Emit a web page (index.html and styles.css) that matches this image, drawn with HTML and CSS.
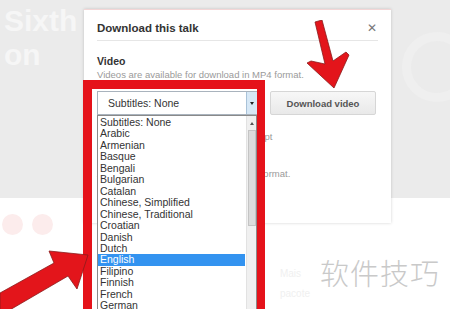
FILE: index.html
```html
<!DOCTYPE html>
<html lang="en">
<head>
  <meta charset="UTF-8" />
  <title>Download this talk</title>
  <link rel="stylesheet" href="styles.css">
</head>
<body>
  <div class="page">
    <div class="hero">
      <div class="hero-title">Sixth<br>on</div>
      <div class="hero-ring"></div>
    </div>
    <div class="below">
      <div class="dots"><span></span><span></span></div>
      <div class="faint-links">
        <div>Mais</div>
        <div>pacote</div>
      </div>
    </div>

    <!-- MODAL -->
    <div class="modal">
      <div class="modal-head">
        <div class="modal-title">Download this talk</div>
        <div class="modal-close">&#x2715;</div>
      </div>
      <div class="section">
        <div class="section-title">Video</div>
        <div class="section-note">Videos are available for download in MP4 format.</div>
        <div class="row">
          <div class="select">
            <span>Subtitles: None</span>
            <span class="select-arrow"></span>
          </div>
          <div class="btn">Download video</div>
        </div>
      </div>
      <div class="section">
        <div class="section-note">Subtitles are only available as a transcript</div>
        <div class="section-note spaced">Audio downloads are available in MP3 format.</div>
      </div>
    </div>

    <!-- OPEN LISTBOX -->
    <div class="listbox">
      <div class="options">
        <div>Subtitles: None</div>
        <div>Arabic</div>
        <div>Armenian</div>
        <div>Basque</div>
        <div>Bengali</div>
        <div>Bulgarian</div>
        <div>Catalan</div>
        <div>Chinese, Simplified</div>
        <div>Chinese, Traditional</div>
        <div>Croatian</div>
        <div>Danish</div>
        <div>Dutch</div>
        <div class="picked">English</div>
        <div>Filipino</div>
        <div>Finnish</div>
        <div>French</div>
        <div>German</div>
      </div>
      <div class="scrollbar">
        <div class="scroll-up"></div>
        <div class="scroll-thumb"></div>
      </div>
    </div>

    <!-- ANNOTATIONS -->
    <div class="frame"></div>
    <svg class="arrow arrow-top" width="60" height="70" viewBox="0 0 60 70">
      <polygon points="12,2 19,0 30,41 43,32 46,35 31,68 4,43 8,41 22,44" fill="#e3151b" stroke="#8a1c1c" stroke-width="0.8"/>
    </svg>
    <svg class="arrow arrow-left" width="95" height="70" viewBox="0 0 95 70">
      <polygon points="0,50 54,20 49,8 88,12 77,46 68,33 8,68 0,69" fill="#e3151b" stroke="#8a1c1c" stroke-width="0.8"/>
    </svg>
    <div class="watermark">软件技巧</div>
  </div>
</body>
</html>
```

FILE: styles.css
```css
/* GLOBAL RESET */
* { box-sizing: border-box; margin: 0; padding: 0; }
html, body { width: 100%; height: 100%; overflow: hidden; font-family: "Liberation Sans", Arial, sans-serif; }

/* PAGE BEHIND THE DIALOG */
.page {
  position: relative;
  width: 450px;
  height: 309px;
  display: flex;
  flex-direction: column;
  background: #fff;
}
.hero {
  height: 198px;
  background: #ebebeb;
  display: flex;
  justify-content: space-between;
  padding: 4px 0 0 4px;
}
.hero-title {
  font-size: 30px;
  font-weight: bold;
  line-height: 34px;
  color: #f6f6f6;
}
.hero-ring {
  width: 70px;
  height: 70px;
  margin: 28px -22px 0 0;
  border-radius: 50%;
  border: 9px solid #efefef;
}
.below {
  flex: 1;
  display: flex;
  justify-content: space-between;
  padding: 16px 0 0 2px;
}
.dots { display: flex; gap: 9px; }
.dots span {
  width: 21px;
  height: 21px;
  border-radius: 50%;
  background: #fcecec;
}
.faint-links {
  margin: 50px 140px 0 0;
  font-size: 10px;
  line-height: 20px;
  color: #f0f0f0;
}

/* DIALOG */
.modal {
  position: absolute;
  top: 9px;
  left: 84px;
  width: 307px;
  height: 214px;
  background: #fff;
  border-top: 1px solid #f3d6d6;
  box-shadow: 0 0 3px rgba(0, 0, 0, 0.18);
  padding: 0 13px;
}
.modal-head {
  height: 31px;
  display: flex;
  align-items: center;
  justify-content: space-between;
  border-bottom: 1px solid #e6e6e6;
  padding-top: 6px;
}
.modal-title {
  font-size: 11.5px;
  font-weight: bold;
  color: #333;
}
.modal-close {
  font-size: 12px;
  color: #777;
  margin-right: 1px;
}
.section { padding-top: 14px; }
.section-title {
  font-size: 10.5px;
  font-weight: bold;
  color: #333;
}
.section-note {
  font-size: 9.5px;
  color: #9a9a9a;
  margin-top: 2px;
  white-space: nowrap;
}
.section-note.spaced { margin-top: 26px; }
.row {
  display: flex;
  align-items: center;
  gap: 12px;
  margin-top: 11px;
}
.select {
  width: 161px;
  height: 24px;
  display: flex;
  align-items: center;
  justify-content: space-between;
  border: 1px solid #a9b3bd;
  padding-left: 10px;
  font-size: 10.5px;
  color: #333;
  background: #fff;
}
.select-arrow {
  width: 11px;
  height: 100%;
  background: #d7e8f6;
  border-left: 1px solid #a9c2d8;
  position: relative;
}
.select-arrow::after {
  content: "";
  position: absolute;
  top: 10px;
  left: 3px;
  border-left: 2.5px solid transparent;
  border-right: 2.5px solid transparent;
  border-top: 3px solid #222;
}
.btn {
  width: 106px;
  height: 24px;
  display: flex;
  align-items: center;
  justify-content: center;
  font-size: 9.5px;
  font-weight: bold;
  color: #555;
  background: linear-gradient(#f7f7f7, #e9e9e9);
  border: 1px solid #d6d6d6;
  border-radius: 2px;
}

/* OPEN LISTBOX */
.listbox {
  position: absolute;
  top: 115px;
  left: 97px;
  width: 160px;
  height: 200px;
  display: flex;
  background: #fff;
  border: 1px solid #8a8a8a;
}
.options {
  flex: 1;
  font-size: 10.5px;
  line-height: 11.45px;
  color: #333;
  padding-top: 1px;
}
.options div { padding-left: 2px; }
.options .picked { background: #3393f0; color: #fff; margin-right: 1px; }
.scrollbar {
  width: 10px;
  background: #f0f0f0;
  border-left: 1px solid #e2e2e2;
  display: flex;
  flex-direction: column;
  align-items: center;
}
.scroll-up {
  margin-top: 6px;
  border-left: 2px solid transparent;
  border-right: 2px solid transparent;
  border-bottom: 3px solid #555;
}
.scroll-thumb {
  width: 8px;
  height: 96px;
  margin-top: 5px;
  background: #dcdcdc;
  border: 1px solid #c4c4c4;
}

/* ANNOTATIONS */
.frame {
  position: absolute;
  top: 80px;
  left: 83px;
  width: 182px;
  height: 240px;
  border: 9px solid #e5121a;
  border-right-width: 8px;
}
.arrow { position: absolute; }
.arrow-top { top: 20px; left: 303px; }
.arrow-left { top: 243px; left: 0; }
.watermark {
  position: absolute;
  top: 251px;
  left: 320px;
  font-family: "Noto Sans CJK SC", sans-serif;
  font-size: 29px;
  font-weight: 300;
  color: #c9c9c9;
  letter-spacing: 1px;
}
```
